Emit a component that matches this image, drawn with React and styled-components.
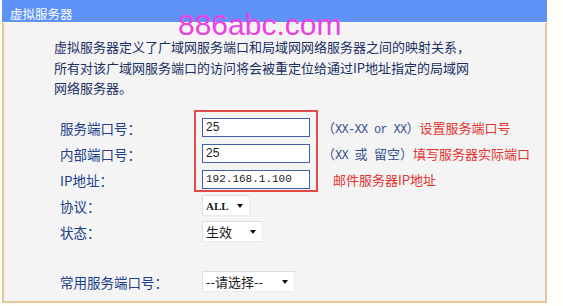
import React from 'react'
import styled, { createGlobalStyle } from 'styled-components'

const GlobalStyle = createGlobalStyle`
  body {
    margin: 0;
    background: #fffdf8;
    font-family: "Noto Sans CJK SC", "Liberation Sans", sans-serif;
  }
`

const Page = styled.div`
  position: relative;
  width: 545px;
  margin-left: 2px;
`

const Header = styled.div`
  height: 22px;
  background: #5f92f6;
  border-bottom: 1px solid #fdfae6;
  padding-left: 8px;
`

const Title = styled.span`
  color: #fff;
  font-size: 12.5px;
  line-height: 22px;
`

const Panel = styled.div`
  box-sizing: border-box;
  height: 280px;
  background: #f4f4f4;
  border: 2px solid #e6c59b;
  border-top: none;
`

const Intro = styled.p`
  margin: 0;
  padding: 14px 0 0 50px;
  font-size: 13px;
  line-height: 20.5px;
  color: #1c2f63;
  white-space: nowrap;
`

const Form = styled.div`
  display: grid;
  grid-template-columns: 142px 120px 1fr;
  grid-template-rows: repeat(5, 26px) 24px 26px;
  padding: 16px 0 0 56px;
`

const Label = styled.div`
  grid-column: 1;
  grid-row: ${(p) => p.$row};
  align-self: center;
  font-size: 13.5px;
  color: #21408a;
  white-space: nowrap;
`

const RedFrame = styled.div`
  grid-column: 2;
  grid-row: 1 / 4;
  margin: -5px 4px 1px -8px;
  border: 2px solid #e14848;
`

const TextInput = styled.div`
  grid-column: 2;
  grid-row: ${(p) => p.$row};
  align-self: center;
  box-sizing: border-box;
  width: 108px;
  height: 19px;
  padding-left: 3px;
  background: #fff;
  border: 1px solid #4560a8;
  font-family: ${(p) => (p.$mono ? '"Liberation Mono", monospace' : '"Liberation Sans", sans-serif')};
  font-size: ${(p) => (p.$mono ? '11px' : '12px')};
  line-height: 17px;
  color: #1a1a1a;
`

const Hint = styled.div`
  grid-column: 3;
  grid-row: ${(p) => p.$row};
  align-self: center;
  padding-left: ${(p) => p.$indent || 0}px;
  font-size: 13px;
  color: #34518f;
  white-space: pre;
`

const Mono = styled.span`
  font-family: "Liberation Mono", monospace;
  font-size: 12px;
  letter-spacing: -0.7px;
`

const Note = styled.span`
  color: #e5332e;
`

const Select = styled.div`
  grid-column: 2;
  grid-row: ${(p) => p.$row};
  align-self: center;
  box-sizing: border-box;
  display: flex;
  align-items: center;
  justify-content: space-between;
  width: ${(p) => p.$width}px;
  height: 21px;
  padding: 0 6px 0 3px;
  background: #fff;
  border: 1px solid #dedede;
  border-right-color: #ececec;
  border-bottom-color: #ececec;
  font-size: 13px;
  color: #1a1a1a;
  white-space: nowrap;
`

const SerifBold = styled.span`
  font-family: "Liberation Serif", serif;
  font-weight: bold;
  font-size: 11px;
`

const Caret = styled.span`
  width: 0;
  height: 0;
  border-left: 3.5px solid transparent;
  border-right: 3.5px solid transparent;
  border-top: 4px solid #111;
  margin-top: 1px;
`

const Watermark = styled.div`
  position: absolute;
  left: 176px;
  top: 10px;
  font-family: "Liberation Sans", Arial, sans-serif;
  font-size: 30px;
  line-height: 30px;
  color: #ee3fe4;
  pointer-events: none;
`

const App = () => {
  return (
    <>
      <GlobalStyle />
      <Page>
        <Header>
          <Title>虚拟服务器</Title>
        </Header>
        <Panel>
          <Intro>
            虚拟服务器定义了广域网服务端口和局域网网络服务器之间的映射关系，
            <br />
            所有对该广域网服务端口的访问将会被重定位给通过IP地址指定的局域网
            <br />
            网络服务器。
          </Intro>
          <Form>
            <Label $row={1}>服务端口号：</Label>
            <Label $row={2}>内部端口号：</Label>
            <Label $row={3}>IP地址：</Label>
            <Label $row={4}>协议：</Label>
            <Label $row={5}>状态：</Label>
            <Label $row={7}>常用服务端口号：</Label>

            <RedFrame />
            <TextInput $row={1}>25</TextInput>
            <TextInput $row={2}>25</TextInput>
            <TextInput $row={3} $mono>192.168.1.100</TextInput>

            <Hint $row={1}>
              （<Mono>XX-XX or XX</Mono>）<Note>设置服务端口号</Note>
            </Hint>
            <Hint $row={2}>
              （<Mono>XX </Mono>或<Mono> </Mono>留空）<Note>填写服务器实际端口</Note>
            </Hint>
            <Hint $row={3} $indent={11}>
              <Note>邮件服务器IP地址</Note>
            </Hint>

            <Select $row={4} $width={48}>
              <SerifBold>ALL</SerifBold>
              <Caret />
            </Select>
            <Select $row={5} $width={61}>
              生效
              <Caret />
            </Select>
            <Select $row={7} $width={93}>
              --请选择--
              <Caret />
            </Select>
          </Form>
        </Panel>
        <Watermark>886abc.com</Watermark>
      </Page>
    </>
  )
}

export default App
